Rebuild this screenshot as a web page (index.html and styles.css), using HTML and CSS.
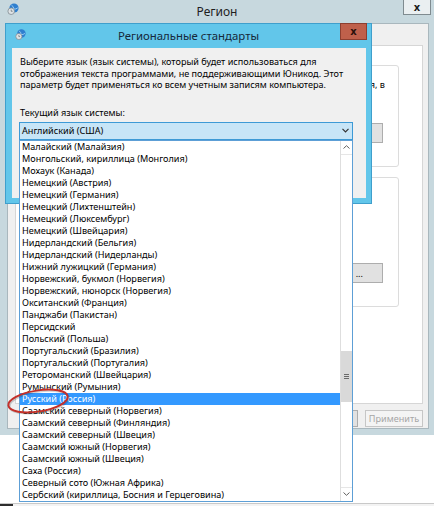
FILE: index.html
```html
<!DOCTYPE html>
<html lang="ru">
<head>
<meta charset="utf-8">
<title>Регион</title>
<link rel="stylesheet" href="styles.css">
</head>
<body>
<div class="screen">
  <div class="region-win">
    <div class="titlebar">
      <svg class="win-icon" viewBox="0 0 12 12" aria-hidden="true">
        <circle cx="7" cy="5" r="4.6" fill="#2f7fcf"/>
        <path d="M4.5 2.2 Q7 3.5 6.5 6 Q9 6.5 10.8 4.8" stroke="#9fd0f5" stroke-width="1" fill="none"/>
        <circle cx="4.2" cy="8.2" r="3.3" fill="#dfe3e6" stroke="#7f8a90" stroke-width="0.8"/>
        <path d="M4.2 6.6 V8.3 H5.6" stroke="#5c666c" stroke-width="0.7" fill="none"/>
      </svg>
      <div class="title">Регион</div>
      <div class="close close-outer">x</div>
    </div>
    <div class="win-body">
      <div class="tab-page">
        <div class="group g1">
          <div class="group-line"><span>ния, в</span></div>
          <div class="btn-row"><span class="btn btn-wide"></span></div>
        </div>
        <div class="group g2">
          <div class="btn-row"><span class="btn btn-wide btn-right">...</span></div>
        </div>
      </div>
      <div class="buttons">
        <span class="btn btn-sm"></span>
        <span class="btn btn-sm disabled">Применить</span>
      </div>
    </div>
  </div>
  <div class="desktop"></div>
  <div class="taskbar"><span class="task-block"></span></div>

  <div class="dialog">
    <div class="dlg-titlebar">
      <svg class="dlg-icon" viewBox="0 0 12 12" aria-hidden="true">
        <circle cx="7" cy="5" r="4.6" fill="#2f7fcf"/>
        <path d="M4.5 2.2 Q7 3.5 6.5 6 Q9 6.5 10.8 4.8" stroke="#9fd0f5" stroke-width="1" fill="none"/>
        <circle cx="4.2" cy="8.2" r="3.3" fill="#dfe3e6" stroke="#7f8a90" stroke-width="0.8"/>
        <path d="M4.2 6.6 V8.3 H5.6" stroke="#5c666c" stroke-width="0.7" fill="none"/>
      </svg>
      <div class="dlg-title">Региональные стандарты</div>
      <div class="close dlg-close">x</div>
    </div>
    <div class="dlg-content">
      <p class="dlg-text">Выберите язык (язык системы), который будет использоваться для<br>отображения текста программами, не поддерживающими Юникод. Этот<br>параметр будет применяться ко всем учетным записям компьютера.</p>
      <p class="dlg-label">Текущий язык системы:</p>
      <div class="combo">
        <span class="combo-value">Английский (США)</span>
        <svg class="combo-arrow" viewBox="0 0 7 5" aria-hidden="true"><path d="M0.5 0.8 L3.5 3.8 L6.5 0.8" stroke="#333" stroke-width="1.2" fill="none"/></svg>
        <div class="dropdown">
          <ul class="items">
            <li>Малайский (Малайзия)</li>
            <li>Монгольский, кириллица (Монголия)</li>
            <li>Мохаук (Канада)</li>
            <li>Немецкий (Австрия)</li>
            <li>Немецкий (Германия)</li>
            <li>Немецкий (Лихтенштейн)</li>
            <li>Немецкий (Люксембург)</li>
            <li>Немецкий (Швейцария)</li>
            <li>Нидерландский (Бельгия)</li>
            <li>Нидерландский (Нидерланды)</li>
            <li>Нижний лужицкий (Германия)</li>
            <li>Норвежский, букмол (Норвегия)</li>
            <li>Норвежский, нюнорск (Норвегия)</li>
            <li>Окситанский (Франция)</li>
            <li>Панджаби (Пакистан)</li>
            <li>Персидский</li>
            <li>Польский (Польша)</li>
            <li>Португальский (Бразилия)</li>
            <li>Португальский (Португалия)</li>
            <li>Ретороманский (Швейцария)</li>
            <li>Румынский (Румыния)</li>
            <li class="sel">Русский (Россия)<svg class="mark" viewBox="0 0 74 34" aria-hidden="true"><ellipse cx="35" cy="19" rx="30" ry="10.5" transform="rotate(-9 35 19)" fill="none" stroke="rgba(0,0,0,0.18)" stroke-width="2.4"/><ellipse cx="34" cy="18" rx="30" ry="10.5" transform="rotate(-9 34 18)" fill="none" stroke="#c4302a" stroke-width="2"/></svg></li>
            <li>Саамский северный (Норвегия)</li>
            <li>Саамский северный (Финляндия)</li>
            <li>Саамский северный (Швеция)</li>
            <li>Саамский южный (Норвегия)</li>
            <li>Саамский южный (Швеция)</li>
            <li>Саха (Россия)</li>
            <li>Северный сото (Южная Африка)</li>
            <li>Сербский (кириллица, Босния и Герцеговина)</li>
          </ul>
          <div class="scrollbar">
            <div class="sb-btn sb-up"><svg viewBox="0 0 7 4" aria-hidden="true"><path d="M0.5 3.5 L3.5 0.7 L6.5 3.5" stroke="#606060" stroke-width="1" fill="none"/></svg></div>
            <div class="sb-track">
              <div class="sb-thumb"><svg viewBox="0 0 5 5" aria-hidden="true"><path d="M0 0.5 H5 M0 2.5 H5 M0 4.5 H5" stroke="#6a6a6a" stroke-width="1"/></svg></div>
            </div>
            <div class="sb-btn sb-down"><svg viewBox="0 0 7 4" aria-hidden="true"><path d="M0.5 0.5 L3.5 3.3 L6.5 0.5" stroke="#606060" stroke-width="1" fill="none"/></svg></div>
          </div>
        </div>
      </div>
    </div>
  </div>
</div>
</body>
</html>
```
FILE: styles.css
```css
* { box-sizing: border-box; }
html, body { margin: 0; padding: 0; }
body {
  width: 434px;
  height: 506px;
  overflow: hidden;
  background: #fff;
  font-family: "Noto Sans", "Open Sans", sans-serif;
  font-size: 9.1px;
  color: #000;
}
.screen {
  position: relative;
  width: 434px;
  height: 506px;
  display: flex;
  flex-direction: column;
}

/* Outer "Регион" window */
.region-win {
  height: 435px;
  flex: none;
  background: #c7d8de;
  display: flex;
  flex-direction: column;
  padding-bottom: 6px;
}
.titlebar {
  height: 23px;
  flex: none;
  display: grid;
  grid-template-columns: 1fr auto 1fr;
}
.win-icon { width: 12px; height: 12px; margin: 3px 0 0 7px; }
.title {
  align-self: center;
  font-size: 12px;
  color: #1e1e1e;
  line-height: 14px;
}
.close {
  display: flex;
  align-items: center;
  justify-content: center;
  font-weight: bold;
  font-size: 10px;
  font-family: "DejaVu Sans", sans-serif;
}
.close-outer {
  justify-self: end;
  align-self: start;
  width: 28px;
  height: 16px;
  margin: -1px 3px 0 0;
  border: 1px solid #7f8b90;
  background: #eaeff1;
  color: #1a1a1a;
}
.win-body {
  flex: 1;
  margin: 0 5px 0 7px;
  background: #f0f0f0;
  border: 1px solid #a9b7bd;
  padding: 21px 5px 0 7px;
  display: flex;
  flex-direction: column;
}
.tab-page {
  height: 359px;
  flex: none;
  background: #fff;
  border: 1px solid #d6d6d6;
  padding: 19px 23px 0 18px;
  display: flex;
  flex-direction: column;
  gap: 10px;
}
.group {
  border: 1px solid #dcdcdc;
  border-radius: 3px;
  padding: 13px 13px 0 12px;
}
.g1 { height: 102px; }
.g2 { height: 130px; padding-top: 0; }
.group-line {
  display: flex;
  justify-content: flex-end;
  line-height: 12px;
}
.group-line span { white-space: nowrap; flex: none; }
.btn-row {
  display: flex;
  justify-content: flex-end;
  padding-right: 2px;
}
.g1 .btn-row { margin-top: 32px; }
.g2 .btn-row { margin-top: 85px; }
.btn {
  height: 20px;
  border: 1px solid #adadad;
  background: #e1e1e1;
  display: flex;
  align-items: center;
  justify-content: center;
  white-space: nowrap;
}
.btn-wide { width: 150px; }
.btn-right { justify-content: flex-end; padding-right: 19px; }
.buttons {
  display: flex;
  justify-content: flex-end;
  gap: 7px;
  margin-top: 6px;
}
.btn-sm { width: 58px; height: 17px; }
.btn-sm.disabled {
  background: #f4f4f4;
  border-color: #c6c6c6;
  color: #a6a6a6;
}
.desktop { flex: 1; background: #fff; }
.taskbar {
  height: 3px;
  flex: none;
  border-top: 1px solid #c9c9c9;
  background: #f3f3f3;
  display: flex;
}
.task-block { width: 13px; background: #2e2e2e; }

/* Dialog "Региональные стандарты" */
.dialog {
  position: absolute;
  left: 5px;
  top: 23px;
  width: 367px;
  height: 181px;
  background: #62c6ea;
  border: 1px solid #3f9fcc;
  display: flex;
  flex-direction: column;
}
.dlg-titlebar {
  height: 24px;
  flex: none;
  display: grid;
  grid-template-columns: 1fr auto 1fr;
}
.dlg-icon { width: 11px; height: 11px; margin: 5px 0 0 9px; }
.dlg-title {
  align-self: center;
  font-size: 11.4px;
  line-height: 14px;
  color: #16283a;
}
.dlg-close {
  justify-self: end;
  align-self: start;
  width: 27px;
  height: 17px;
  margin: -1px 4px 0 0;
  background: #bf604b;
  border: 1px solid #8d3f30;
  color: #2b0f0a;
}
.dlg-content {
  flex: 1;
  margin: 0 5px 5px 6px;
  background: #f0f0f0;
  padding: 8px 0 0 8px;
}
.dlg-text {
  margin: 0;
  line-height: 11.7px;
  white-space: nowrap;
}
.dlg-label {
  margin: 16px 0 0;
  line-height: 11.7px;
}
.combo {
  position: relative;
  margin: 3px 0 0 -1px;
  width: 334px;
  height: 18px;
  border: 1px solid #3d9ad6;
  background: #c7e5f7;
  display: flex;
  align-items: center;
  padding-left: 2px;
}
.combo-arrow { width: 7px; height: 5px; margin-left: auto; margin-right: 3px; }

/* Open dropdown list */
.dropdown {
  position: absolute;
  left: -1px;
  top: calc(100% + 1px);
  width: 334px;
  height: 362px;
  border: 1px solid #5d9fd6;
  background: #fff;
  display: grid;
  grid-template-columns: 1fr 12px;
  z-index: 2;
}
.items { list-style: none; margin: 0; padding: 0; }
.items li {
  height: 12px;
  line-height: 12px;
  padding-left: 2px;
  white-space: nowrap;
}
.items li.sel {
  background: #3399ff;
  color: #fff;
  position: relative;
}
.mark {
  position: absolute;
  left: -16px;
  top: -10px;
  width: 74px;
  height: 34px;
  overflow: visible;
}
.scrollbar {
  display: flex;
  flex-direction: column;
  border-left: 1px solid #dedede;
}
.sb-btn {
  height: 14px;
  flex: none;
  display: flex;
  align-items: center;
  justify-content: center;
}
.sb-btn svg { width: 7px; height: 4px; }
.sb-up { border-bottom: 1px solid #e6e6e6; }
.sb-down { border-top: 1px solid #e6e6e6; }
.sb-track { flex: 1; }
.sb-thumb {
  margin-top: 196px;
  height: 51px;
  background: #d9d9d9;
  display: flex;
  align-items: center;
  justify-content: center;
}
.sb-thumb svg { width: 5px; height: 5px; }
```
